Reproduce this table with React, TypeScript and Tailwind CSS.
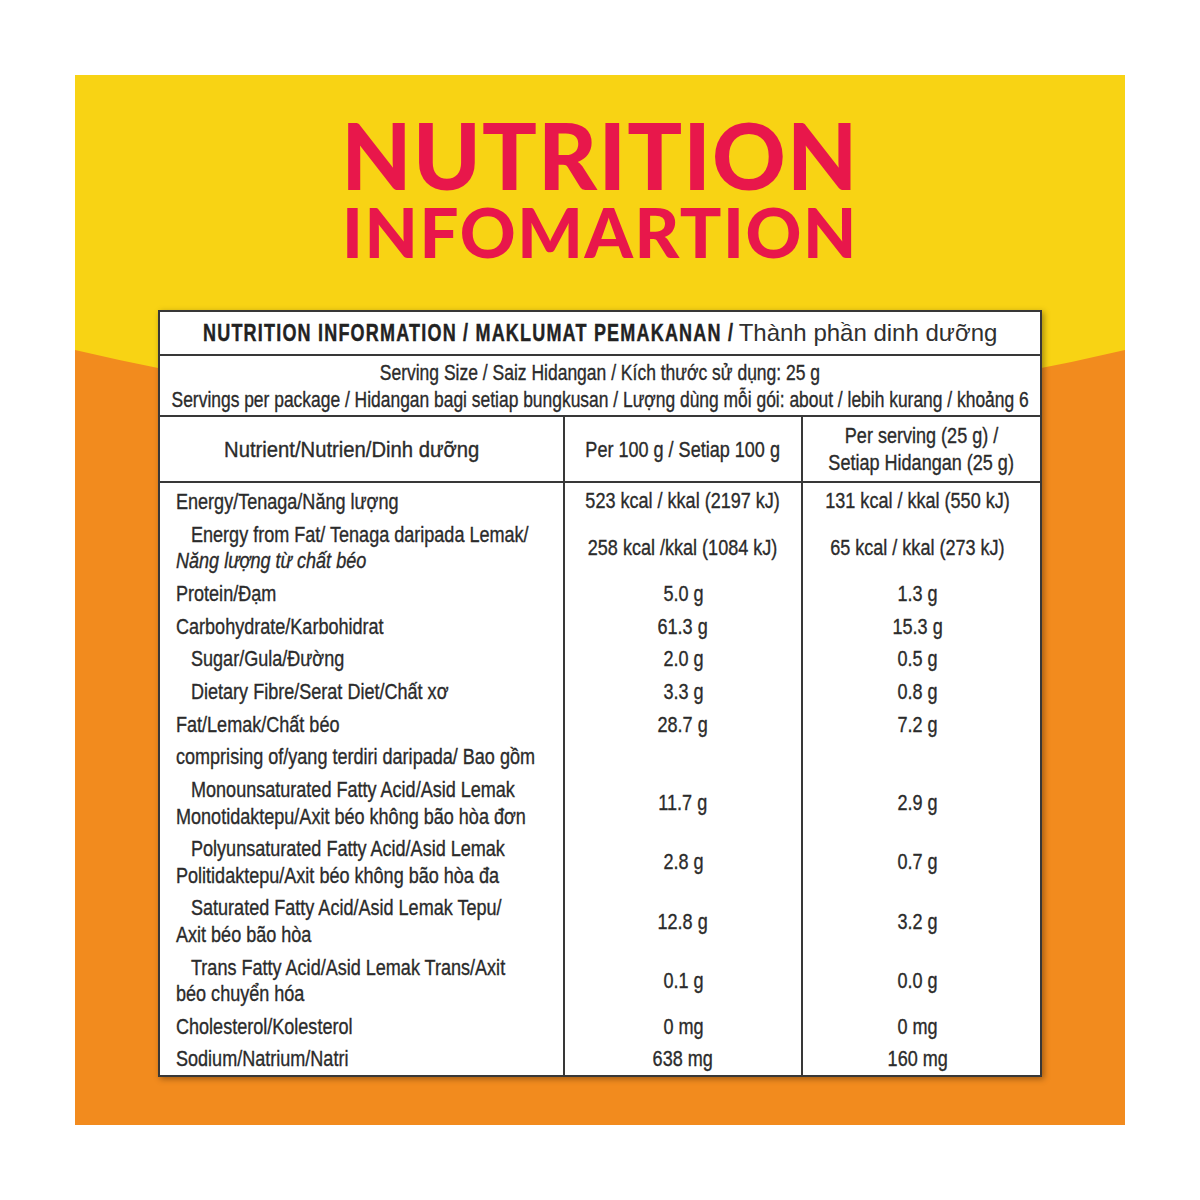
import React from 'react';

type Line = { text: string; indent?: boolean; italic?: boolean };
type Row = { lines: Line[]; a: string; b: string };

const rows: Row[] = [
  { lines: [{ text: 'Energy/Tenaga/Năng lượng' }], a: '523 kcal / kkal (2197 kJ)', b: '131 kcal / kkal (550 kJ)' },
  {
    lines: [
      { text: 'Energy from Fat/ Tenaga daripada Lemak/', indent: true },
      { text: 'Năng lượng từ chất béo', italic: true },
    ],
    a: '258 kcal /kkal (1084 kJ)',
    b: '65 kcal / kkal (273 kJ)',
  },
  { lines: [{ text: 'Protein/Đạm' }], a: '5.0 g', b: '1.3 g' },
  { lines: [{ text: 'Carbohydrate/Karbohidrat' }], a: '61.3 g', b: '15.3 g' },
  { lines: [{ text: 'Sugar/Gula/Đường', indent: true }], a: '2.0 g', b: '0.5 g' },
  { lines: [{ text: 'Dietary Fibre/Serat Diet/Chất xơ', indent: true }], a: '3.3 g', b: '0.8 g' },
  { lines: [{ text: 'Fat/Lemak/Chất béo' }], a: '28.7 g', b: '7.2 g' },
  { lines: [{ text: 'comprising of/yang terdiri daripada/ Bao gồm' }], a: '', b: '' },
  {
    lines: [
      { text: 'Monounsaturated Fatty Acid/Asid Lemak', indent: true },
      { text: 'Monotidaktepu/Axit béo không bão hòa đơn' },
    ],
    a: '11.7 g',
    b: '2.9 g',
  },
  {
    lines: [
      { text: 'Polyunsaturated Fatty Acid/Asid Lemak', indent: true },
      { text: 'Politidaktepu/Axit béo không bão hòa đa' },
    ],
    a: '2.8 g',
    b: '0.7 g',
  },
  {
    lines: [
      { text: 'Saturated Fatty Acid/Asid Lemak Tepu/', indent: true },
      { text: 'Axit béo bão hòa' },
    ],
    a: '12.8 g',
    b: '3.2 g',
  },
  {
    lines: [
      { text: 'Trans Fatty Acid/Asid Lemak Trans/Axit', indent: true },
      { text: 'béo chuyển hóa' },
    ],
    a: '0.1 g',
    b: '0.0 g',
  },
  { lines: [{ text: 'Cholesterol/Kolesterol' }], a: '0 mg', b: '0 mg' },
  { lines: [{ text: 'Sodium/Natrium/Natri' }], a: '638 mg', b: '160 mg' },
];

function C({
  children,
  left,
  italic,
  s = 'scale-x-[0.82]',
}: {
  children: React.ReactNode;
  left?: boolean;
  italic?: boolean;
  s?: string;
}) {
  return (
    <span
      className={`inline-block whitespace-nowrap [-webkit-text-stroke:0.35px_#2b2b2b] ${s} ${
        left ? 'origin-left' : 'origin-center'
      } ${italic ? 'italic' : ''}`}
    >
      {children}
    </span>
  );
}

export default function App() {
  return (
    <div className="w-[1200px] h-[1200px] bg-white p-[75px] font-['Liberation_Sans',Arial,sans-serif]">
      <div className="relative w-[1050px] h-[1050px] overflow-hidden">
        <svg className="absolute inset-0" width="1050" height="1050" viewBox="0 0 1050 1050">
          <rect x="0" y="0" width="1050" height="1050" fill="#f8d314" />
          <path d="M0 275 Q525 399 1050 275 L1050 1050 L0 1050 Z" fill="#f28b1e" />
        </svg>
        <div className="relative flex flex-col items-center pt-[40px] px-[83px]">
          <div className="font-['Lato',sans-serif] font-black text-[91px] leading-[80px] tracking-[1.2px] text-[#e8174b]">
            NUTRITION
          </div>
          <div className="font-['Lato',sans-serif] font-black text-[69px] leading-[70px] tracking-[1.6px] text-[#e8174b] pt-[2px]">
            INFOMARTION
          </div>

          <div className="mt-[43px] w-[884px] bg-white border-2 border-[#383838] shadow-[2px_2px_6px_rgba(0,0,0,0.35)] text-[#2b2b2b] text-[22px]">
            {/* Header row */}
            <div className="h-[44px] flex items-center justify-center gap-[6px] border-b-2 border-[#383838]">
              <span className="inline-block w-[530px] overflow-visible">
                <span className="inline-block whitespace-nowrap origin-left scale-x-[0.75] font-bold text-[24px] tracking-[1.6px] text-[#222222] [-webkit-text-stroke:0.4px_#222222]">
                  NUTRITION INFORMATION / MAKLUMAT PEMAKANAN /
                </span>
              </span>
              <span className="whitespace-nowrap text-[24px] text-[#303030]">Thành phần dinh dưỡng</span>
            </div>

            {/* Serving row */}
            <div className="h-[61px] flex flex-col items-center justify-center leading-[27px] border-b-2 border-[#383838]">
              <C s="scale-x-[0.795]">Serving Size / Saiz Hidangan / Kích thước sử dụng: 25 g</C>
              <C s="scale-x-[0.792]">
                Servings per package / Hidangan bagi setiap bungkusan / Lượng dùng mỗi gói: about / lebih kurang / khoảng 6
              </C>
            </div>

            {/* Column header row */}
            <div className="grid grid-cols-[403px_238px_239px] h-[66px] border-b-2 border-[#383838] leading-[27px]">
              <div className="flex items-center justify-center pr-5">
                <C s="scale-x-[0.92]">Nutrient/Nutrien/Dinh dưỡng</C>
              </div>
              <div className="flex items-center justify-center border-l-2 border-[#383838]">
                <C>Per 100 g / Setiap 100 g</C>
              </div>
              <div className="flex flex-col items-center justify-center border-l-2 border-[#383838]">
                <C>Per serving (25 g) /</C>
                <C>Setiap Hidangan (25 g)</C>
              </div>
            </div>

            {/* Body */}
            <div className="flex flex-col leading-[26.5px]">
              {rows.map((r, i) => (
                <div key={i} className="grid grid-cols-[403px_238px_239px]">
                  <div
                    className={`flex flex-col pl-4 py-[3.1px] ${i === 0 ? 'pt-[6px]' : ''} ${
                      i === rows.length - 1 ? 'pb-[2px]' : ''
                    }`}
                  >
                    {r.lines.map((l, j) => (
                      <div key={j} className={l.indent ? 'pl-[15px]' : ''}>
                        <C left italic={l.italic}>
                          {l.text}
                        </C>
                      </div>
                    ))}
                  </div>
                  <div className="flex items-center justify-center border-l-2 border-[#383838]">
                    <C>{r.a}</C>
                  </div>
                  <div className="flex items-center justify-center border-l-2 border-[#383838] pr-[8px]">
                    <C>{r.b}</C>
                  </div>
                </div>
              ))}
            </div>
          </div>
        </div>
      </div>
    </div>
  );
}
